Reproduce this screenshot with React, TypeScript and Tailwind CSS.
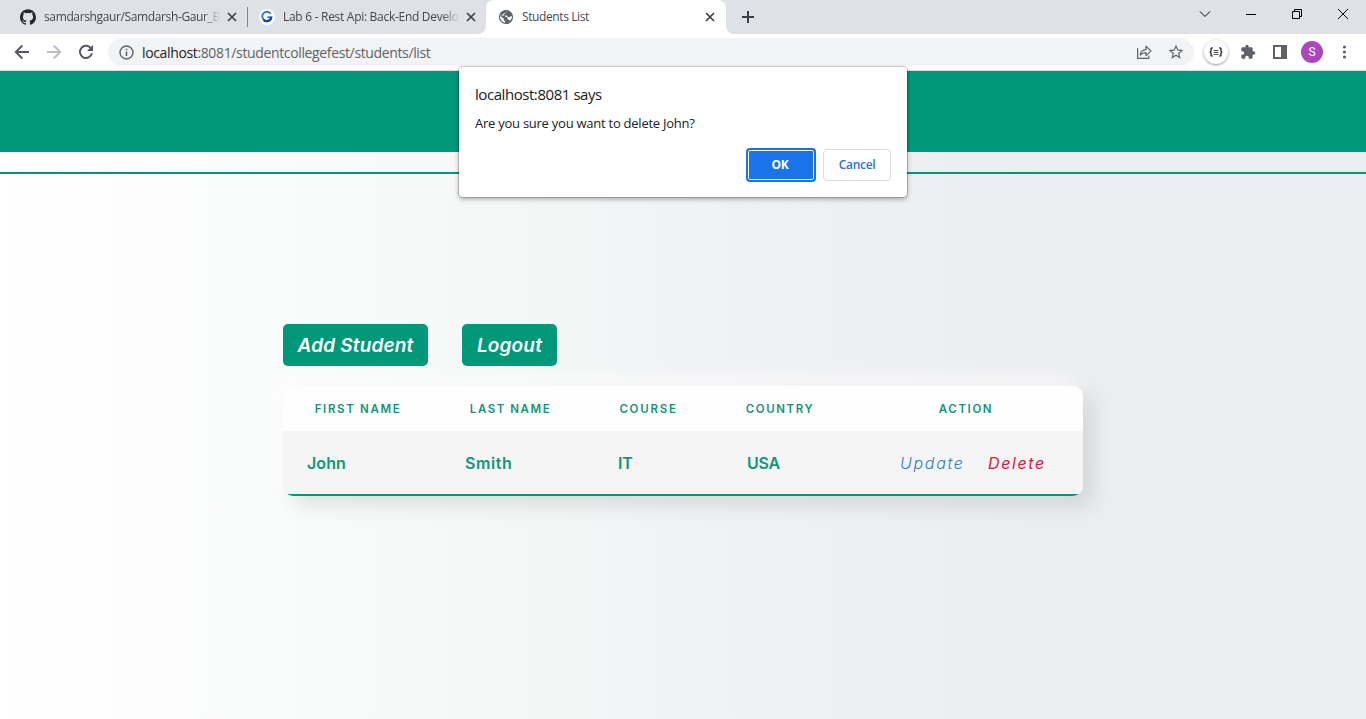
import type { ReactNode } from 'react';
import { SiGithub } from 'react-icons/si';
import { MdExtension, MdStarBorder } from 'react-icons/md';

function CloseIcon() {
  return (
    <svg className="h-[10px] w-[10px] shrink-0" viewBox="0 0 10 10" fill="none" stroke="#3c4043" strokeWidth="1.7">
      <path d="M1 1l8 8M9 1l-8 8" />
    </svg>
  );
}

function BackgroundTab({ icon, title, className }: { icon: ReactNode; title: ReactNode; className: string }) {
  return (
    <div className={`flex h-[34px] shrink-0 items-center ${className}`}>
      <span className="flex w-6 shrink-0 items-center">{icon}</span>
      <span className="mr-[6px] w-[177px] whitespace-nowrap [mask-image:linear-gradient(to_right,black_90%,transparent)]">
        {title}
      </span>
      <CloseIcon />
    </div>
  );
}

function TabStrip() {
  return (
    <div className="flex h-[34px] bg-white text-[12px] text-[#45494d]">
      <div className="flex h-[34px] shrink-0 rounded-br-lg bg-[#dee1e6]">
        <BackgroundTab
          className="w-[247px] pl-5"
          icon={<SiGithub className="h-4 w-4 text-[#24292f]" />}
          title={<span className="tracking-[-0.37px]">samdarshgaur/Samdarsh-Gaur_B</span>}
        />
        <div className="mt-[7px] h-5 w-px bg-[#80868b]" />
        <BackgroundTab
          className="w-[238px] pl-[11px]"
          icon={
            <svg className="h-4 w-4" viewBox="0 0 16 16">
              <circle cx="8" cy="8" r="8" fill="#fff" />
              <path d="M11.7 4.8A4.6 4.6 0 1 0 12.4 8.2H8.4" fill="none" stroke="#2b7de0" strokeWidth="1.9" />
              <path d="M4.6 11A4.6 4.6 0 0 0 12.4 8.2" fill="none" stroke="#173a91" strokeWidth="1.9" />
            </svg>
          }
          title={<span className="tracking-[-0.29px]">Lab 6 - Rest Api: Back-End Develo</span>}
        />
      </div>
      <div className="h-[34px] w-[240px] shrink-0 bg-[linear-gradient(#dee1e6_50%,#ffffff_50%)]">
        <div className="flex h-[34px] items-center rounded-t-lg bg-white pr-[11px] pl-3">
          <svg className="mr-2 h-4 w-4" viewBox="0 0 16 16">
            <circle cx="8" cy="8" r="7.1" fill="#5f6368" />
            <path
              d="M9.3 2.3c-.2 1-1 1-1.7 1.3-.8.4-.3 1.3-1.2 1.7-.7.3-.8 1.2-.1 1.300h2.200c.9 0 .8 1.300 1.700 1.400h1.100c.8 0 .9-.8 1.700-.8h1.100c0 1.700-.9 3.400-2.200 4.500-.3-.9-1-.9-1.700-.9-.7 0-.6-1.200-.6-1.900 0-.7-.8-.8-1.400-.9-1-.1-.9-1.400-1.900-1.400H2.100C1.700 9.200 2.600 11 4 12.200c.9.800 2 1.200 3.200 1.300v-1c0-.7-1.400-.8-1.400-1.700V9.700L2.200 7z"
              fill="#fff"
            />
          </svg>
          <span className="grow tracking-[-0.4px]">Students List</span>
          <CloseIcon />
        </div>
      </div>
      <div className="flex h-[34px] grow rounded-bl-lg bg-[#dee1e6]">
        <svg className="mt-[11px] ml-4 h-3 w-3" viewBox="0 0 12 12" stroke="#3c4043" strokeWidth="2">
          <path d="M6 0v12M0 6h12" />
        </svg>
        <div className="ml-auto flex h-7 items-center pr-[17px] text-black">
          <svg className="mr-[34px] h-3 w-3" viewBox="0 0 12 12" fill="none" stroke="currentColor">
            <path d="M1 3.5l5 5 5-5" />
          </svg>
          <svg className="mr-[34px] h-3 w-3" viewBox="0 0 12 12" fill="none" stroke="currentColor">
            <path d="M1 6.5h10" />
          </svg>
          <svg className="mr-[34px] h-3 w-3" viewBox="0 0 12 12" fill="none" stroke="currentColor">
            <path d="M1.5 3.5h7v7h-7zM3.5 3.5v-2h7v7h-2" />
          </svg>
          <svg className="h-3 w-3" viewBox="0 0 12 12" fill="none" stroke="currentColor">
            <path d="M1 1l10 10M11 1L1 11" />
          </svg>
        </div>
      </div>
    </div>
  );
}

function Toolbar() {
  return (
    <div className="flex h-[37px] items-center border-b border-[#dcdfe2] bg-white pr-[11px] pl-[14px] text-[#5f6368]">
      <svg className="mr-4 h-4 w-4" viewBox="0 0 16 16" fill="none" stroke="#55595e" strokeWidth="1.9">
        <path d="M15 8H2M8.3 1.5L1.8 8l6.5 6.5" />
      </svg>
      <svg className="mr-4 h-4 w-4" viewBox="0 0 16 16" fill="none" stroke="#babcbe" strokeWidth="1.9">
        <path d="M1 8h13M7.7 1.5L14.2 8l-6.5 6.5" />
      </svg>
      <svg className="h-4 w-4" viewBox="0 0 16 16" fill="none" stroke="#55595e" strokeWidth="2">
        <path d="M13.2 4.6A6.1 6.1 0 1 0 14 9.3" />
        <path d="M15 1v6H9z" fill="#55595e" stroke="none" />
      </svg>
      <div className="ml-[14px] flex h-7 w-[1086px] items-center rounded-full bg-[#f1f3f4] pr-[9px] pl-[11px]">
        <svg className="mr-2 h-[15px] w-[15px]" viewBox="0 0 15 15" fill="none" stroke="#5f6368" strokeWidth="1.4">
          <circle cx="7.5" cy="7.5" r="6.5" />
          <path d="M7.5 6.6V11M7.5 3.8v1.5" strokeWidth="1.6" />
        </svg>
        <span className="grow text-[14px] tracking-[-0.36px]">
          <span className="text-[#202124]">localhost</span>:8081/studentcollegefest/students/list
        </span>
        <svg className="mr-[15px] h-4 w-4" viewBox="0 0 16 16" fill="none" stroke="#5f6368" strokeWidth="1.2">
          <path d="M1.6 4.2v10.2h11.200V11.5" />
          <path d="M4.2 11c.5-3.7 2.4-5.2 5.8-5.4V2.200l5 4.700-5 4.700V8.600C7.500 8.600 5.700 9.300 4.200 11z" strokeLinejoin="round" />
        </svg>
        <MdStarBorder className="h-[18px] w-[18px]" />
      </div>
      <div className="ml-[10px] flex h-6 w-6 items-center justify-center rounded-full bg-white shadow-[0_1px_3px_rgba(0,0,0,0.4)]">
        <svg className="h-[10px] w-[14px]" viewBox="0 0 14 10" fill="none" stroke="#202124" strokeWidth="1.3">
          <path d="M3.600 1H3Q2 1 2 2v1.500Q2 5 .8 5 2 5 2 6.500V8Q2 9 3 9h.6M10.400 1h.6q1 0 1 1v1.500Q12 5 13.200 5 12 5 12 6.500V8q0 1-1 1h-.6" />
          <path d="M4.500 3.500h5M4.500 5.500h5M4.500 7.500h5" strokeWidth=".8" />
        </svg>
      </div>
      <MdExtension className="ml-3 h-4 w-4" />
      <svg className="ml-4 h-4 w-4" viewBox="0 0 16 16">
        <path d="M1 1h14v14H1zM3 3v10h6V3z" fill="#5f6368" fillRule="evenodd" />
      </svg>
      <div className="ml-[13px] flex h-[22px] w-[22px] items-center justify-center rounded-full bg-[#ab47bc] font-['Roboto',sans-serif] text-[12px] text-white">
        S
      </div>
      <svg className="ml-auto h-4 w-4" viewBox="0 0 16 16" fill="#5f6368">
        <circle cx="5.5" cy="3" r="1.6" />
        <circle cx="5.5" cy="8" r="1.6" />
        <circle cx="5.5" cy="13" r="1.6" />
      </svg>
    </div>
  );
}

function ConfirmDialog() {
  return (
    <div
      role="dialog"
      className="absolute top-[67px] left-[459px] h-[130px] w-[448px] rounded-[4px] bg-white px-4 pt-4 text-[#202124] shadow-[0_0_0_1px_rgba(0,0,0,0.16),0_2px_5px_rgba(0,0,0,0.35)]"
    >
      <h2 className="text-[15px] leading-[22px] tracking-[-0.44px]">localhost:8081 says</h2>
      <p className="mt-[9px] text-[13px] leading-[19px] tracking-[-0.25px]">Are you sure you want to delete John?</p>
      <div className="mt-4 flex justify-end gap-2 text-[12px] font-semibold">
        <button className="h-8 w-[68px] rounded-[3px] border border-[#1a73e8] bg-[#1a73e8] pr-0.5 font-bold tracking-[-0.2px] text-white shadow-[0_0_0_1px_#1a73e8,inset_0_0_0_1px_white]">
          OK
        </button>
        <button className="h-8 w-[68px] rounded-[4px] border border-[#dadce0] tracking-[-0.3px] text-[#2a70e4]">
          Cancel
        </button>
      </div>
    </div>
  );
}

function StudentsTable() {
  return (
    <div className="h-[110px] w-[800px] overflow-hidden rounded-[10px] shadow-[10px_10px_20px_rgba(0,0,0,0.1),-8px_-8px_20px_rgba(255,255,255,0.7)]">
      <div className="grid h-[45px] grid-cols-[150px_152px_128px_140px_230px] items-center bg-[#fefefe] pt-0.5 text-center text-[11.5px] font-semibold text-[#139479]">
        <span className="tracking-[1.65px]">FIRST NAME</span>
        <span className="pl-[3px] tracking-[1.55px]">LAST NAME</span>
        <span className="pr-px tracking-[1.75px]">COURSE</span>
        <span className="pr-[6px] tracking-[1.6px]">COUNTRY</span>
        <span className="pr-1 tracking-[1.6px]">ACTION</span>
      </div>
      <div className="grid h-[65px] grid-cols-[150px_152px_128px_140px_230px] items-center border-b-2 border-[#009879] bg-[#f5f5f5] text-[16px] font-semibold text-[#119678]">
        <span className="pl-6 tracking-[0.1px]">John</span>
        <span className="pl-8 tracking-[0.6px]">Smith</span>
        <span className="pl-[33px] tracking-[-0.3px]">IT</span>
        <span className="pl-[34px] tracking-[-0.2px]">USA</span>
        <span className="flex pl-[47px] italic">
          <a className="w-[88px] font-light tracking-[1.7px] text-[#2c7fbe]">Update</a>
          <a className="font-normal tracking-[1.6px] text-[#dc143c]">Delete</a>
        </span>
      </div>
    </div>
  );
}

export default function App() {
  return (
    <div className="relative flex h-[719px] w-[1366px] flex-col overflow-hidden font-['Open_Sans','Noto_Sans',sans-serif]">
      <TabStrip />
      <Toolbar />
      <div className="flex grow flex-col bg-[linear-gradient(90deg,#ffffff_0%,#f5f7f7_38%,#f1f2f4_50%,#ecedef_76%,#ecedef_100%)] font-['Inter',sans-serif]">
        <header className="h-[103px] border-b-2 border-[#009879]">
          <div className="h-[81px] bg-[#009879]" />
        </header>
        <main className="pt-[150px] pl-[283px]">
          <div className="mb-5 flex gap-[34px] text-[19px] font-semibold text-white">
            <button className="h-[42px] w-[145px] rounded-[5px] bg-[#009879] pt-0.5 tracking-[0.15px] italic">Add Student</button>
            <button className="h-[42px] w-[95px] rounded-[5px] bg-[#009879] pt-0.5 tracking-[0.15px] italic">Logout</button>
          </div>
          <StudentsTable />
        </main>
      </div>
      <ConfirmDialog />
    </div>
  );
}
